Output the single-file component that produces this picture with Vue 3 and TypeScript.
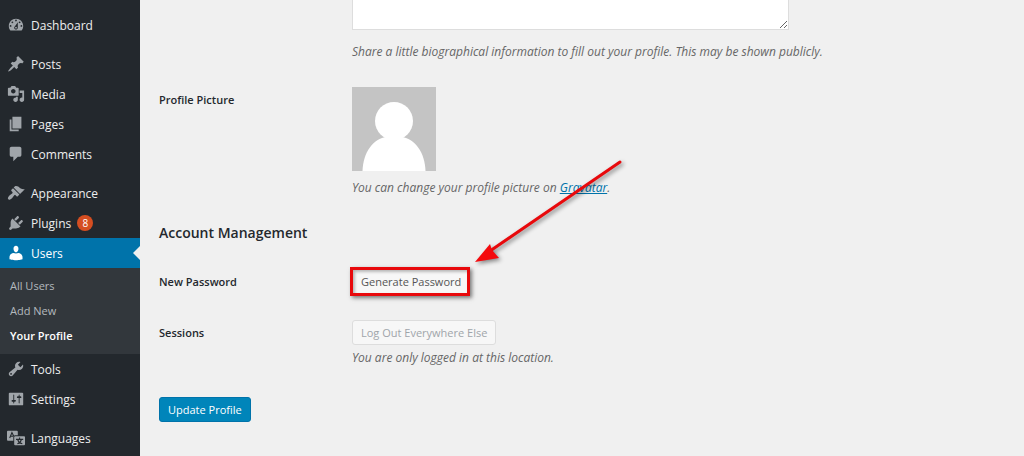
<script setup lang="ts">
interface MenuItem {
  label: string
  icon: string
  badge?: number
  current?: boolean
  gapBefore?: boolean
  children?: { label: string; current?: boolean }[]
}

const menu: MenuItem[] = [
  {
    label: 'Dashboard',
    icon: 'M3.76 16h12.48c1.1-1.37 1.76-3.11 1.76-5 0-4.42-3.58-8-8-8s-8 3.58-8 8c0 1.89.66 3.63 1.76 5zM10 4c.55 0 1 .45 1 1s-.45 1-1 1-1-.45-1-1 .45-1 1-1zM6 6c.55 0 1 .45 1 1s-.45 1-1 1-1-.45-1-1 .45-1 1-1zm8 0c.55 0 1 .45 1 1s-.45 1-1 1-1-.45-1-1 .45-1 1-1zm-5.37 5.55L12 7v6c0 1.1-.9 2-2 2s-2-.9-2-2c0-.57.24-1.08.63-1.45zM4 10c.55 0 1 .45 1 1s-.45 1-1 1-1-.45-1-1 .45-1 1-1zm12 0c.55 0 1 .45 1 1s-.45 1-1 1-1-.45-1-1 .45-1 1-1zm-5 3c0-.55-.45-1-1-1s-1 .45-1 1 .45 1 1 1 1-.45 1-1z',
  },
  {
    label: 'Posts',
    gapBefore: true,
    icon: 'M10.44 3.02l1.82-1.82 6.36 6.35-1.83 1.82c-1.05-.68-2.48-.57-3.41.36l-.75.75c-.92.93-1.04 2.35-.35 3.41l-1.83 1.82-2.41-2.41-2.8 2.79c-.42.42-3.38 2.71-3.8 2.29s1.86-3.39 2.28-3.81l2.79-2.79L4.1 9.36l1.83-1.82c1.05.69 2.48.57 3.4-.36l.75-.75c.93-.92 1.05-2.35.36-3.41z',
  },
  {
    label: 'Media',
    icon: 'M13 11V4c0-.55-.45-1-1-1h-1.67L9 1H5L3.67 3H2c-.55 0-1 .45-1 1v7c0 .55.45 1 1 1h10c.55 0 1-.45 1-1zM7 4.5c1.38 0 2.5 1.12 2.5 2.5S8.38 9.5 7 9.5 4.5 8.38 4.5 7 5.62 4.5 7 4.5zM14 6h5v10.5c0 1.38-1.12 2.5-2.5 2.5S14 17.88 14 16.5s1.12-2.5 2.5-2.5c.17 0 .34.02.5.05V9h-3V6zm-4 8.05V13h2v3.5c0 1.38-1.12 2.5-2.5 2.5S7 17.88 7 16.5 8.12 14 9.5 14c.17 0 .34.02.5.05z',
  },
  { label: 'Pages', icon: 'M6 15V2h10v13H6zm-1 1h8v2H3V5h2v11z' },
  {
    label: 'Comments',
    icon: 'M5 2h9c1.1 0 2 .9 2 2v7c0 1.1-.9 2-2 2h-2l-5 5v-5H5c-1.1 0-2-.9-2-2V4c0-1.1.9-2 2-2z',
  },
  {
    label: 'Appearance',
    gapBefore: true,
    icon: 'M14.48 11.06L7.41 3.99l1.5-1.5c.5-.56 2.3-.47 3.51.32 1.21.8 1.43 1.28 2.91 2.1 1.18.64 2.45 1.26 4.45.85zm-.71.71L6.7 4.7 4.93 6.47c-.39.39-.39 1.02 0 1.41l1.06 1.06c.39.39.39 1.03 0 1.42-.6.6-1.43 1.11-2.21 1.69-.35.26-.7.53-1.01.84C1.43 14.23.4 16.08 1.4 17.07c.99 1 2.84-.03 4.18-1.36.31-.31.58-.66.85-1.02.57-.78 1.08-1.61 1.69-2.21.39-.39 1.02-.39 1.41 0l1.06 1.06c.39.39 1.02.39 1.41 0z',
  },
  {
    label: 'Plugins',
    badge: 8,
    icon: 'M13.11 4.36L9.87 7.6 8 5.73l3.24-3.24c.35-.34 1.05-.2 1.56.32.52.51.66 1.21.31 1.55zm-8 1.77l.91-1.12 9.01 9.01-1.19.84c-.71.71-2.63 1.16-3.82 1.16H6.14L4.9 17.26c-.59.59-1.54.59-2.12 0-.59-.58-.59-1.53 0-2.12l1.24-1.24v-3.88c0-1.13.4-3.19 1.09-3.89zm7.26 3.97l3.24-3.24c.34-.35 1.04-.21 1.55.31.52.51.66 1.21.31 1.55l-3.24 3.25z',
  },
  {
    label: 'Users',
    current: true,
    icon: 'M10 9.25c-2.27 0-2.73-3.44-2.73-3.44C7 4.02 7.82 2 9.97 2c2.16 0 2.98 2.02 2.71 3.81 0 0-.41 3.44-2.68 3.44zm0 1.25L12.72 10c2.39 0 4.52 2.33 4.52 4.53v2.49s-3.65 1.13-7.24 1.13c-3.65 0-7.24-1.13-7.24-1.13v-2.49c0-2.25 1.94-4.48 4.47-4.48z',
    children: [{ label: 'All Users' }, { label: 'Add New' }, { label: 'Your Profile', current: true }],
  },
  {
    label: 'Tools',
    icon: 'M16.68 9.77c-1.34 1.34-3.3 1.67-4.95.99l-5.41 6.52c-.99.99-2.59.99-3.58 0s-.99-2.59 0-3.57l6.52-5.42c-.68-1.65-.35-3.61.99-4.95 1.28-1.28 3.12-1.62 4.72-1.06l-2.89 2.89 2.82 2.82 2.86-2.87c.53 1.58.18 3.39-1.08 4.65zM3.81 16.21c.4.39 1.04.39 1.43 0 .4-.4.4-1.04 0-1.43-.39-.4-1.03-.4-1.43 0-.39.39-.39 1.03 0 1.43z',
  },
  {
    label: 'Settings',
    icon: 'M18 16V4c0-.55-.45-1-1-1H3c-.55 0-1 .45-1 1v12c0 .55.45 1 1 1h14c.55 0 1-.45 1-1zM8 11h1c.55 0 1 .45 1 1s-.45 1-1 1H8v1.5c0 .28-.22.5-.5.5s-.5-.22-.5-.5V13H6c-.55 0-1-.45-1-1s.45-1 1-1h1V5.5c0-.28.22-.5.5-.5s.5.22.5.5V11zm5-2h-1c-.55 0-1-.45-1-1s.45-1 1-1h1V5.5c0-.28.22-.5.5-.5s.5.22.5.5V7h1c.55 0 1 .45 1 1s-.45 1-1 1h-1v5.5c0 .28-.22.5-.5.5s-.5-.22-.5-.5V9z',
  },
  { label: 'Languages', gapBefore: true, icon: '' },
]
</script>

<template>
  <div class="admin">
    <nav class="sidebar" aria-label="Main menu">
      <ul class="menu">
        <li v-for="item in menu" :key="item.label" :class="{ gap: item.gapBefore }">
          <a href="#" class="item" :class="{ current: item.current }">
            <svg class="icon" viewBox="0 0 20 20" aria-hidden="true">
              <path v-if="item.icon" :d="item.icon" />
              <g v-else>
                <path d="M1 2h10a1 1 0 0 1 1 1v4H9a2 2 0 0 0-2 2v4H1a1 1 0 0 1-1-1V3a1 1 0 0 1 1-1z" />
                <path d="M9 8h10a1 1 0 0 1 1 1v8a1 1 0 0 1-1 1H9a1 1 0 0 1-1-1V9a1 1 0 0 1 1-1z" />
                <path class="mark" d="M3 10l2.500-6L7.500 8M4 8h3M14 9.500v2M10 11.500h8M11.500 16.500c3-1 4-2.500 4.500-5M12 12c.5 2 2 3.500 5 4.500" />
              </g>
            </svg>
            <span class="text">{{ item.label }}</span>
            <span v-if="item.badge" class="badge">{{ item.badge }}</span>
          </a>
          <ul v-if="item.children" class="submenu">
            <li v-for="child in item.children" :key="child.label">
              <a href="#" :class="{ active: child.current }">{{ child.label }}</a>
            </li>
          </ul>
        </li>
      </ul>
    </nav>

    <main class="content">
      <form class="form" @submit.prevent>
        <div class="row bio">
          <div class="label"></div>
          <div class="field">
            <textarea class="bio-box" aria-label="Biographical Info"></textarea>
            <p class="hint bio-hint">Share a little biographical information to fill out your profile. This may be shown publicly.</p>
          </div>
        </div>

        <div class="row picture">
          <div class="label">Profile Picture</div>
          <div class="field">
            <svg class="avatar" viewBox="0 0 84 84" role="img" aria-label="Default avatar">
              <rect width="84" height="84" fill="#c4c4c4" />
              <circle cx="42" cy="34" r="19" fill="#fff" />
              <path d="M10.500 84C11 66 21 51 35 50h14c14 1 24 16 24.500 34z" fill="#fff" />
            </svg>
            <p class="hint">You can change your profile picture on <a href="#">Gravatar</a>.</p>
          </div>
        </div>

        <h2>Account Management</h2>

        <div class="row">
          <label class="label" for="generate">New Password</label>
          <div class="field">
            <div class="target">
              <button id="generate" type="button" class="button">Generate Password</button>
              <span class="frame"></span>
              <svg class="arrow" viewBox="0 0 160 120" aria-hidden="true">
                <path d="M150 10L20 99" stroke="#e8090c" stroke-width="3" stroke-linecap="round" />
                <path d="M5 110L20 92L22 98L29 106Z" fill="#f40a0d" />
              </svg>
            </div>
          </div>
        </div>

        <div class="row sessions">
          <label class="label" for="logout">Sessions</label>
          <div class="field">
            <button id="logout" type="button" class="button" disabled>Log Out Everywhere Else</button>
            <p class="hint">You are only logged in at this location.</p>
          </div>
        </div>

        <button type="submit" class="button primary">Update Profile</button>
      </form>
    </main>
  </div>
</template>

<style>
body {
  background: #f0f0f0;
}
</style>

<style scoped>
.admin {
  display: flex;
  min-height: 100vh;
  font-family: "Open Sans", "Noto Sans", sans-serif;
  font-size: 12px;
  line-height: 18px;
  color: #24282d;
}

.sidebar {
  flex: 0 0 140px;
  background: #23282d;
}

ul {
  margin: 0;
  padding: 0;
  list-style: none;
}

.menu {
  padding-top: 10px;
}

.gap {
  margin-top: 9px;
}

.item {
  position: relative;
  display: flex;
  align-items: center;
  gap: 6px;
  height: 30px;
  padding-left: 7px;
  color: #eee;
  text-decoration: none;
}

.text {
  padding-top: 2px;
}

.icon {
  width: 18px;
  height: 18px;
  fill: #a0a5aa;
}

.mark {
  fill: none;
  stroke: #23282d;
  stroke-width: 1.2;
}

.item.current {
  background: #0073aa;
  color: #fff;
}

.item.current .icon {
  fill: #fff;
}

.item.current::after {
  content: "";
  position: absolute;
  right: 0;
  top: 8px;
  border: 7px solid transparent;
  border-left-width: 0;
  border-right-color: #f0f0f0;
}

.badge {
  width: 16px;
  height: 16px;
  border-radius: 8px;
  background: #d54e21;
  color: #fff;
  font-size: 10px;
  line-height: 16px;
  text-align: center;
}

.submenu {
  padding: 5px 0 6px;
  background: #32373c;
}

.submenu a {
  display: block;
  padding-left: 10px;
  font-size: 11px;
  line-height: 25px;
  color: #b4b9be;
  text-decoration: none;
}

.submenu .active {
  color: #fff;
  font-weight: 600;
}

.content {
  flex: 1;
  min-width: 0;
  padding: 0 19px;
  background: #f0f0f0;
}

.row {
  display: grid;
  grid-template-columns: 193px minmax(0, 1fr);
}

.label {
  padding-top: 4px;
  font-size: 11px;
  font-weight: 600;
}

.picture {
  margin-top: 26px;
}

.bio-box {
  display: block;
  box-sizing: border-box;
  width: 100%;
  max-width: 437px;
  height: 30px;
  border: 1px solid #ddd;
  border-top: 0;
  background: #fff;
  font: inherit;
}

.hint {
  margin: 8px 0 0;
  font-style: italic;
  color: #666;
}

.bio-hint {
  margin-top: 13px;
}

.hint a {
  color: #0073aa;
}

.avatar {
  display: block;
  width: 84px;
  height: 84px;
}

h2 {
  margin: 26px 0;
  font-size: 14px;
  line-height: 20px;
  font-weight: 600;
}

.button {
  display: block;
  box-sizing: border-box;
  height: 25px;
  padding: 0 8px;
  border: 1px solid #ccc;
  border-radius: 3px;
  background: #f7f7f7;
  color: #555;
  font-family: inherit;
  font-size: 11px;
  line-height: 18px;
}

.button:disabled {
  border-color: #ddd;
  color: #a0a5aa;
}

.target {
  position: relative;
  width: max-content;
}

.target .button {
  border-color: #f0f0f0;
}

.frame {
  position: absolute;
  inset: -2px 0 -2px -2px;
  border: 3px solid #e8090c;
  box-shadow: 2px 2px 4px rgba(0, 0, 0, 0.5), inset 2px 2px 3px rgba(0, 0, 0, 0.25);
  pointer-events: none;
}

.arrow {
  position: absolute;
  left: 100%;
  bottom: 22px;
  width: 160px;
  height: 120px;
  fill: none;
  filter: drop-shadow(2px 2px 2px rgba(0, 0, 0, 0.45));
  pointer-events: none;
}

.sessions {
  margin-top: 26px;
}

.sessions .hint {
  margin-top: 4px;
}

.primary {
  margin-top: 30px;
  border-color: #0073aa;
  background: #0085ba;
  color: #fff;
}
</style>
